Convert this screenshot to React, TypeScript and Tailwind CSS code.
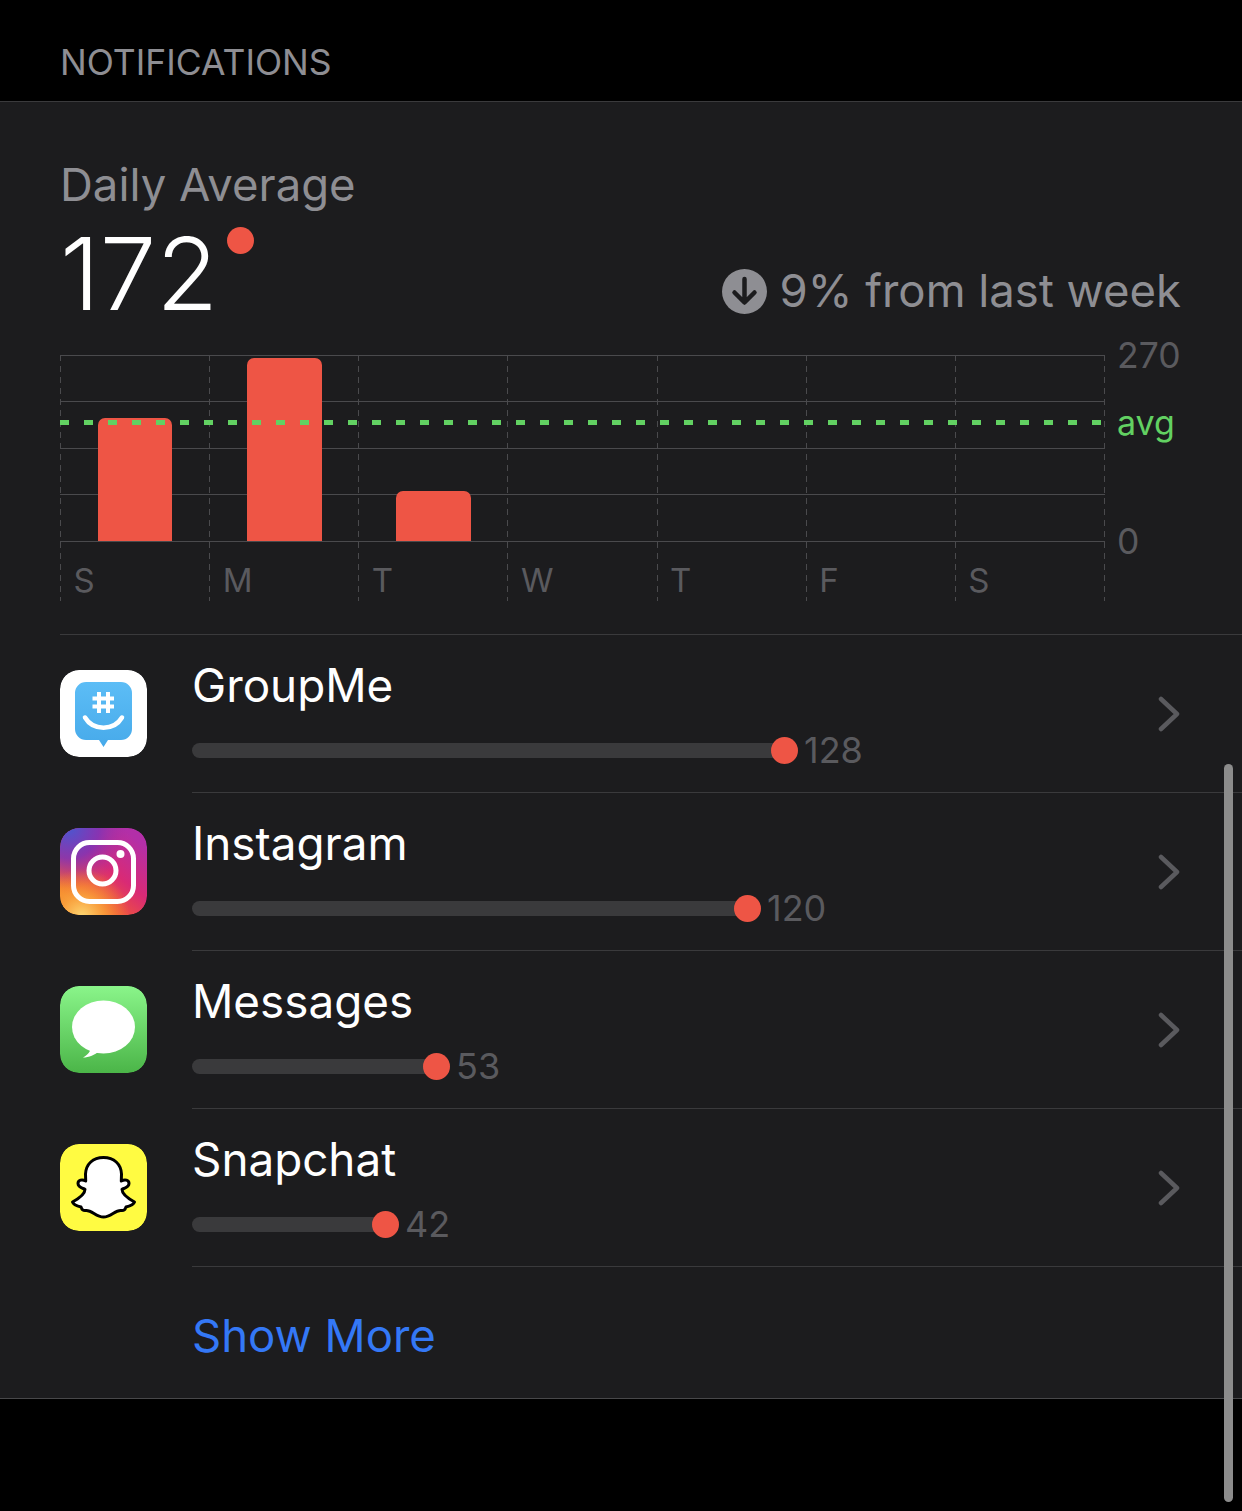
import React from "react";

const GroupMeIcon = () => (
  <svg viewBox="0 0 87 87" className="block h-full w-full">
    <defs>
      <linearGradient id="gm" x1="0" y1="0" x2="0" y2="1">
        <stop offset="0" stopColor="#5cbdf6" />
        <stop offset="1" stopColor="#47aaea" />
      </linearGradient>
    </defs>
    <rect width="87" height="87" rx="19" fill="#fff" />
    <path d="M26 12H61A11 11 0 0 1 72 23V59A11 11 0 0 1 61 70H48L43.5 77L39 70H26A11 11 0 0 1 15 59V23A11 11 0 0 1 26 12Z" fill="url(#gm)" />
    <path d="M39 22V43M48 22V43M32.5 28.5H54M32.5 36.5H54" stroke="#fff" strokeWidth="4" fill="none" />
    <path d="M25 47.5C33 61 54 61 62 47.5" stroke="#fff" strokeWidth="4.5" strokeLinecap="round" fill="none" />
  </svg>
);

const InstagramIcon = () => (
  <svg viewBox="0 0 87 87" className="block h-full w-full">
    <defs>
      <linearGradient id="igBase" x1="0.85" y1="0.1" x2="0.2" y2="0.9">
        <stop offset="0" stopColor="#b32fa8" />
        <stop offset="0.45" stopColor="#d92a75" />
        <stop offset="0.8" stopColor="#f0563a" />
        <stop offset="1" stopColor="#f58a2c" />
      </linearGradient>
      <radialGradient id="igY" cx="0.25" cy="1.02" r="0.55">
        <stop offset="0" stopColor="#fdd874" />
        <stop offset="0.45" stopColor="#f9a03c" stopOpacity="0.9" />
        <stop offset="1" stopColor="#f58a2c" stopOpacity="0" />
      </radialGradient>
      <radialGradient id="igB" cx="0.1" cy="0" r="0.7">
        <stop offset="0" stopColor="#4a57d0" />
        <stop offset="0.5" stopColor="#7d35b8" stopOpacity="0.85" />
        <stop offset="1" stopColor="#a52fa8" stopOpacity="0" />
      </radialGradient>
    </defs>
    <rect width="87" height="87" rx="19" fill="url(#igBase)" />
    <rect width="87" height="87" rx="19" fill="url(#igB)" />
    <rect width="87" height="87" rx="19" fill="url(#igY)" />
    <rect x="13.5" y="14.5" width="60" height="59" rx="16" fill="none" stroke="#fff" strokeWidth="5" />
    <circle cx="42.5" cy="42.5" r="13.5" fill="none" stroke="#fff" strokeWidth="5" />
    <circle cx="60.5" cy="26" r="4" fill="#fff" />
  </svg>
);

const MessagesIcon = () => (
  <svg viewBox="0 0 87 87" className="block h-full w-full">
    <defs>
      <linearGradient id="msg" x1="0" y1="0" x2="0" y2="1">
        <stop offset="0" stopColor="#8af58a" />
        <stop offset="1" stopColor="#4bb548" />
      </linearGradient>
    </defs>
    <rect width="87" height="87" rx="19" fill="url(#msg)" />
    <ellipse cx="43.5" cy="41" rx="31.5" ry="26.5" fill="#fff" />
    <path d="M31 60C31 65 28 69 23 71.5C29 71.5 35 69 39 65Z" fill="#fff" />
  </svg>
);

const SnapchatIcon = () => (
  <svg viewBox="0 0 87 87" className="block h-full w-full">
    <rect width="87" height="87" rx="19" fill="#fffb42" />
    <path
      d="M43.5 13.5C33 13.5 26 20 25.5 30L25.7 37C22 35 18 36 18 39.5C18 43 22 44 25 45.3C25 50 18 55 12.5 58C13.5 61 17 62 21 63C22 66 23 67 26 66.5C32 66 36 73 43.5 73C51 73 55 66 61 66.5C64 67 65 66 66 63C70 62 73.5 61 74.5 58C69 55 62 50 62 45.3C65 44 69 43 69 39.5C69 36 65 35 61.3 37L61.5 30C61 20 54 13.5 43.5 13.5Z"
      fill="#fff"
      stroke="#000"
      strokeWidth="3"
      strokeLinejoin="round"
    />
  </svg>
);

const Chevron = () => (
  <svg viewBox="0 0 24 36" className="block h-[36px] w-[24px]">
    <path d="M4 3L20 18L4 33" fill="none" stroke="#5a5a5e" strokeWidth="4.5" strokeLinecap="round" strokeLinejoin="round" />
  </svg>
);

const apps = [
  { name: "GroupMe", value: 128, width: "w-[593px]", icon: <GroupMeIcon /> },
  { name: "Instagram", value: 120, width: "w-[556px]", icon: <InstagramIcon /> },
  { name: "Messages", value: 53, width: "w-[245px]", icon: <MessagesIcon /> },
  { name: "Snapchat", value: 42, width: "w-[194px]", icon: <SnapchatIcon /> },
];

const days = [
  { label: "S", bar: "h-[123px] w-[74px]" },
  { label: "M", bar: "h-[183px] w-[75px]" },
  { label: "T", bar: "h-[50px] w-[75px]" },
  { label: "W", bar: "" },
  { label: "T", bar: "" },
  { label: "F", bar: "" },
  { label: "S", bar: "" },
];

const Dashed = () => (
  <div className="absolute left-0 top-0 h-full w-px bg-[repeating-linear-gradient(to_bottom,#4a4a4d_0,#4a4a4d_6px,transparent_6px,transparent_11px)]" />
);

export default function App() {
  return (
    <div className="relative h-[1511px] w-full overflow-hidden bg-black font-['Inter',sans-serif]">
      <header className="h-[102px] border-b border-[#3a3a3c] pl-[60px] pt-[39px] text-[35.5px] leading-[48px] text-[#8e8e93]">
        NOTIFICATIONS
      </header>

      <main className="h-[1297px] border-b border-[#48484a] bg-[#1c1c1e] pl-[60px]">
        <div className="pr-[61px] pt-[54px] text-[#8e8e93]">
          <div className="text-[45.5px] leading-[58px]">Daily Average</div>
          <div className="flex h-[142px] items-start justify-between">
            <div className="flex items-start">
              <span className="text-[101px] font-light leading-[118px] text-white">172</span>
              <span className="ml-[9px] mt-[13px] h-[27px] w-[27px] rounded-full bg-[#ee5545]" />
            </div>
            <div className="mt-[50px] flex items-center gap-[12px]">
              <svg viewBox="0 0 45 45" className="h-[45px] w-[45px]">
                <circle cx="22.5" cy="22.5" r="22.5" fill="#8e8e93" />
                <path d="M22.5 10V33M12.5 23.5L22.5 33.5L32.5 23.5" fill="none" stroke="#1c1c1e" strokeWidth="4.5" strokeLinecap="round" strokeLinejoin="round" />
              </svg>
              <span className="text-[45.5px] leading-[54px]">9% from last week</span>
            </div>
          </div>
        </div>

        {/* chart */}
        <div className="relative mt-[-1px] h-[246px] w-[1045px]">
          <div className="absolute inset-x-0 top-0 flex h-[187px] flex-col border-b border-[#4a4a4d]">
            <div className="h-[46px] border-t border-[#4a4a4d]" />
            <div className="h-[47px] border-t border-[#4a4a4d]" />
            <div className="h-[46px] border-t border-[#4a4a4d]" />
            <div className="flex-1 border-t border-[#4a4a4d]" />
          </div>
          <div className="relative grid h-full w-[1044px] grid-cols-7">
            {days.map((d, i) => (
              <div key={i} className="relative">
                <Dashed />
                <div className="flex h-[186px] items-end justify-center pl-[1px]">
                  {d.bar && <div className={`${d.bar} rounded-t-[7px] bg-[#ee5545]`} />}
                </div>
                <div className="pl-[13.5px] pt-[18px] text-[33px] leading-[42px] text-[#5a5a5e]">{d.label}</div>
              </div>
            ))}
          </div>
          <div className="absolute right-0 top-0 h-full w-px">
            <Dashed />
          </div>
          <div className="absolute inset-x-0 top-[65px] h-[5px] bg-[repeating-linear-gradient(to_right,#62d162_0,#62d162_9px,transparent_9px,transparent_24px)]" />
          <span className="absolute left-[1057px] top-[-20px] text-[35.5px] leading-[42px] text-[#5a5a5e]">270</span>
          <span className="absolute left-[1057px] top-[47px] text-[34px] leading-[42px] text-[#62d162]">avg</span>
          <span className="absolute left-[1057px] top-[166px] text-[35.5px] leading-[42px] text-[#5a5a5e]">0</span>
        </div>

        <div className="mt-[33px] border-t border-[#3a3a3c]">
          {apps.map((a) => (
            <div key={a.name} className="flex h-[158px]">
              <div className="mr-[45px] mt-[35px] h-[87px] w-[87px] shrink-0 overflow-hidden rounded-[19px]">{a.icon}</div>
              <div className="relative flex-1 border-b border-[#3a3a3c] pt-[22px]">
                <div className="text-[45.8px] leading-[58px] text-white">{a.name}</div>
                <div className="mt-[14px] flex h-[42px] items-center">
                  <div className={`${a.width} relative h-[15px] rounded-full bg-[#3a3a3c]`}>
                    <span className="absolute right-[-13px] top-[-6px] h-[27px] w-[27px] rounded-full bg-[#ee5545]" />
                  </div>
                  <span className="ml-[19px] text-[36px] leading-[42px] text-[#5a5a5e]">{a.value}</span>
                </div>
                <div className="absolute right-[61px] top-[61px]">
                  <Chevron />
                </div>
              </div>
            </div>
          ))}
          <div className="pl-[132px] pt-[39px] text-[45.5px] leading-[60px] text-[#3478f6]">Show More</div>
        </div>
      </main>

      <div className="absolute left-[1224px] top-[764px] h-[738px] w-[9px] rounded-full bg-[#8c8c8c]" />
    </div>
  );
}
